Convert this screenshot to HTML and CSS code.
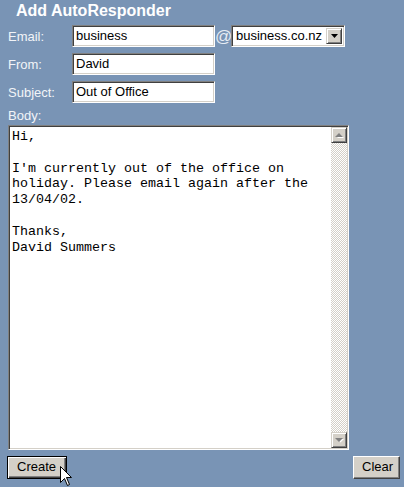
FILE: index.html
```html
<!DOCTYPE html>
<html>
<head>
<meta charset="utf-8">
<link rel="stylesheet" href="styles.css">
</head>
<body>
<div class="panel">
  <h1 class="title">Add AutoResponder</h1>
  <div class="rows">
    <div class="row">
      <span class="label">Email:</span>
      <span class="field">business</span>
      <span class="at">@</span>
      <span class="select">
        <span class="sel-text">business.co.nz</span>
        <span class="sel-btn"><svg width="7" height="4" viewBox="0 0 7 4"><polygon points="0,0 7,0 3.5,4" fill="#000"/></svg></span>
      </span>
    </div>
    <div class="row">
      <span class="label">From:</span>
      <span class="field">David</span>
    </div>
    <div class="row">
      <span class="label">Subject:</span>
      <span class="field">Out of Office</span>
    </div>
  </div>
  <div class="label body-label">Body:</div>
  <div class="textarea">
    <div class="ta-text">Hi,

I'm currently out of the office on
holiday. Please email again after the
13/04/02.

Thanks,
David Summers</div>
    <div class="scrollbar">
      <span class="sb-btn"><svg width="9" height="6" viewBox="0 0 9 6"><polygon points="1,5 8,5 4.5,1.5" fill="#fff" transform="translate(1,1)"/><polygon points="0,5 8,5 4,1" fill="#808080"/></svg></span>
      <span class="sb-track"></span>
      <span class="sb-btn"><svg width="9" height="6" viewBox="0 0 9 6"><polygon points="1,1 8,1 4.5,4.5" fill="#fff" transform="translate(1,1)"/><polygon points="0,1 8,1 4,5" fill="#808080"/></svg></span>
    </div>
  </div>
  <div class="actions">
    <span class="btn btn-default"><span class="btn-face">Create</span></span>
    <span class="btn"><span class="btn-face">Clear</span></span>
  </div>
  <svg class="cursor" width="13" height="21" viewBox="0 0 13 21"><polygon points="0.5,0.5 0.5,16.5 4.5,12.5 7.5,19.5 9.5,18.5 6.5,11.5 11.5,11.5" fill="#fff" stroke="#000" stroke-width="1"/></svg>
</div>
</body>
</html>
```

FILE: styles.css
```css
html, body {
  margin: 0;
  padding: 0;
  background: #7994b5;
}
.panel {
  position: relative;
  width: 404px;
  height: 487px;
  padding: 0 4px 0 8px;
  box-sizing: border-box;
  font-family: "Liberation Sans", Arial, sans-serif;
  font-size: 13px;
  overflow: hidden;
}
.title {
  margin: 2px 0 0 8px;
  font-size: 16px;
  line-height: 18px;
  font-weight: bold;
  color: #fff;
}
.rows {
  margin-top: 5px;
  display: flex;
  flex-direction: column;
  gap: 6px;
}
.row {
  display: flex;
  align-items: center;
  height: 22px;
}
.label {
  color: #f2f4f8;
  line-height: 15px;
  width: 64px;
  flex: none;
}
.field {
  box-sizing: border-box;
  width: 143px;
  height: 22px;
  background: #fff;
  color: #000;
  border-style: solid;
  border-width: 1px;
  border-color: #808080 #fff #fff #808080;
  box-shadow: inset 1px 1px 0 #404040, inset -1px -1px 0 #d4d0c8;
  padding: 0 3px;
  line-height: 20px;
  white-space: nowrap;
}
.at {
  width: 16px;
  text-align: center;
  font-size: 17px;
  line-height: 20px;
  color: #e6ecf4;
  margin-top: 1px;
}
.select {
  box-sizing: border-box;
  width: 114px;
  height: 22px;
  background: #fff;
  display: flex;
  align-items: center;
  border-style: solid;
  border-width: 1px;
  border-color: #808080 #fff #fff #808080;
  box-shadow: inset 1px 1px 0 #404040, inset -1px -1px 0 #d4d0c8;
  padding: 2px 2px 2px 4px;
}
.sel-text {
  flex: 1;
  line-height: 18px;
  color: #000;
}
.sel-btn {
  box-sizing: border-box;
  width: 16px;
  height: 16px;
  background: #d4d0c8;
  border-style: solid;
  border-width: 1px;
  border-color: #d4d0c8 #404040 #404040 #d4d0c8;
  box-shadow: inset 1px 1px 0 #fff, inset -1px -1px 0 #808080;
  display: flex;
  align-items: center;
  justify-content: center;
}
.body-label {
  margin-top: 5px;
  width: auto;
}
.textarea {
  margin-top: 2px;
  box-sizing: border-box;
  width: 341px;
  height: 325px;
  background: #fff;
  display: flex;
  border-style: solid;
  border-width: 1px;
  border-color: #808080 #fff #fff #808080;
  box-shadow: inset 1px 1px 0 #404040, inset -1px -1px 0 #d4d0c8;
  padding: 1px 1px 1px 1px;
}
.ta-text {
  flex: 1;
  font-family: "Liberation Mono", "Courier New", monospace;
  font-size: 13.33px;
  line-height: 15.8px;
  white-space: pre;
  color: #000;
  padding: 2px 0 0 2px;
}
.scrollbar {
  width: 16px;
  display: flex;
  flex-direction: column;
}
.sb-btn {
  box-sizing: border-box;
  width: 16px;
  height: 16px;
  background: #d4d0c8;
  border-style: solid;
  border-width: 1px;
  border-color: #d4d0c8 #404040 #404040 #d4d0c8;
  box-shadow: inset 1px 1px 0 #fff, inset -1px -1px 0 #808080;
  display: flex;
  align-items: center;
  justify-content: center;
}
.sb-track {
  flex: 1;
  background: repeating-conic-gradient(#d4d0c8 0 25%, #fff 0 50%) 0 0 / 2px 2px;
}
.actions {
  margin: 6px 0 0 -1px;
  display: flex;
  justify-content: space-between;
}
.btn {
  box-sizing: border-box;
  height: 23px;
  background: #d4d0c8;
  border-style: solid;
  border-width: 1px;
  border-color: #fff #404040 #404040 #fff;
  box-shadow: inset -1px -1px 0 #808080;
  display: flex;
}
.btn-face {
  line-height: 20px;
  color: #000;
  padding: 0 7px 0 8px;
}
.actions .btn:first-child {
  width: 60px;
}
.actions .btn:last-child {
  width: 47px;
}
.btn-default {
  border: 1px solid #000;
  box-shadow: inset 1px 1px 0 #fff, inset -1px -1px 0 #404040, inset -2px -2px 0 #808080;
}
.btn-default .btn-face {
  padding: 0 0 0 9px;
}
.cursor {
  position: absolute;
  left: 60px;
  top: 466px;
}
```
